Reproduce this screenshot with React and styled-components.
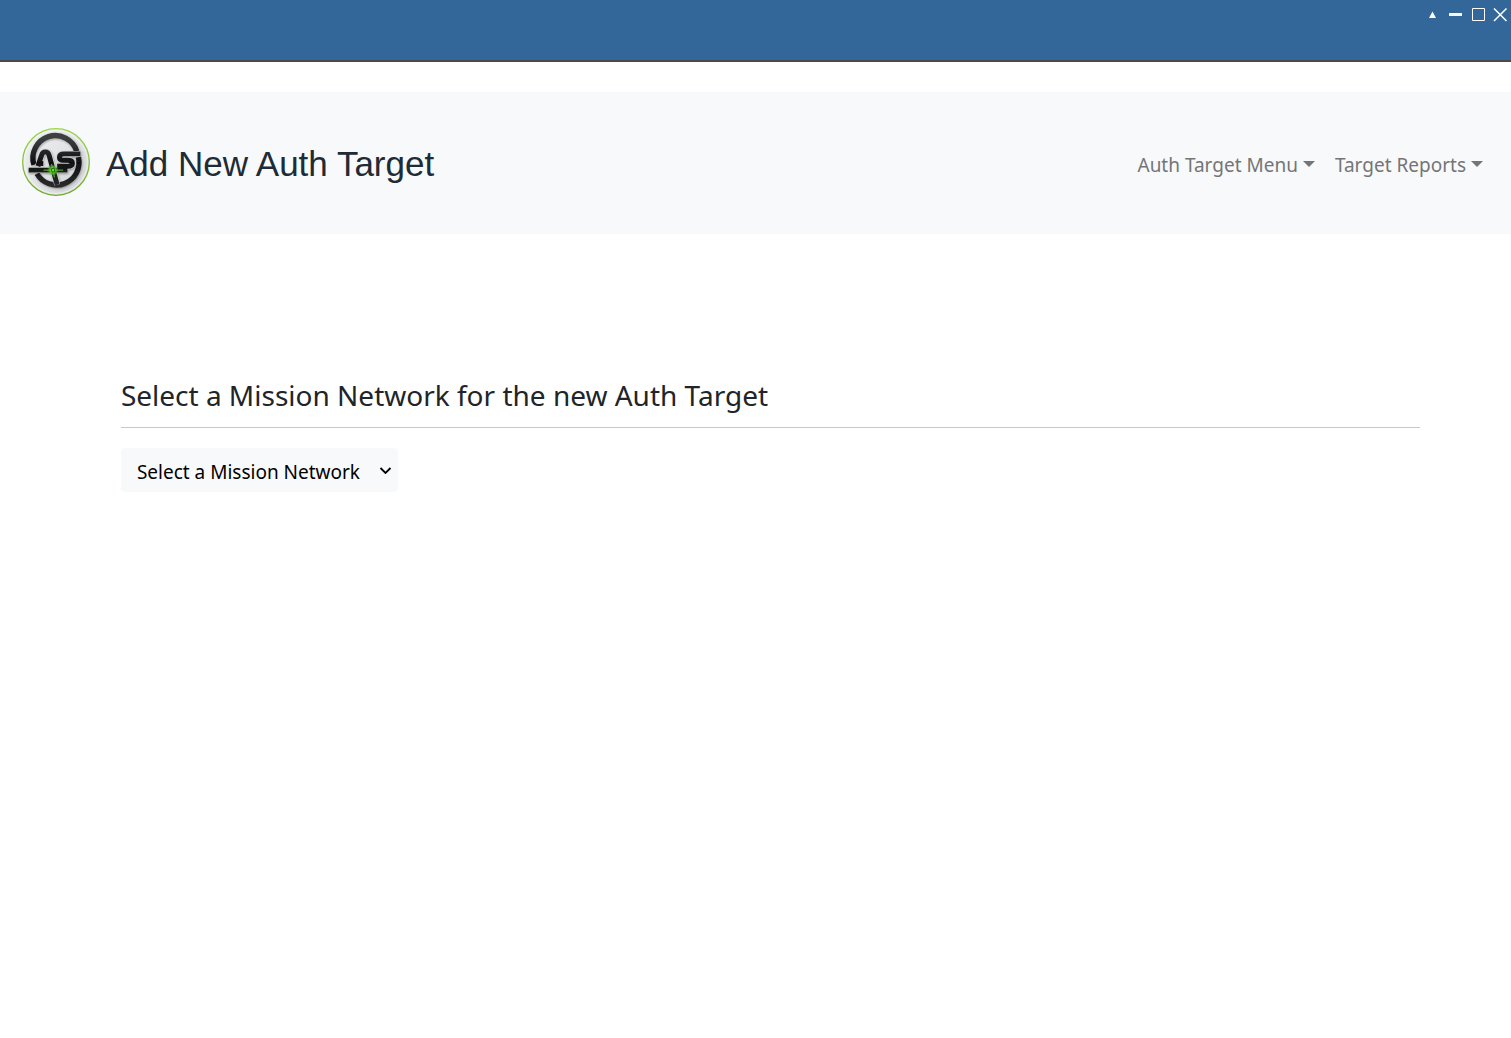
import React from "react";
import styled, { createGlobalStyle } from "styled-components";

const GlobalStyle = createGlobalStyle`
  *, *::before, *::after { box-sizing: border-box; }
  body {
    margin: 0;
    background: #fff;
    color: #212529;
    font-family: "Segoe UI", "Noto Sans", sans-serif;
    font-size: 19px;
    line-height: 28px;
  }
`;

const TitleBar = styled.header`
  display: flex;
  justify-content: flex-end;
  align-items: flex-start;
  height: 62px;
  padding: 4px 0;
  background: #336699;
  border-bottom: 2px solid #4a4a4a;
`;

const WindowButton = styled.button`
  display: grid;
  place-items: center;
  width: 22px;
  height: 22px;
  padding: 0;
  border: 0;
  background: none;
  color: #fff;
  cursor: pointer;
`;

const WindowControls = styled.div`
  display: flex;
`;

const Navbar = styled.nav`
  display: flex;
  align-items: center;
  justify-content: space-between;
  margin-top: 30px;
  padding: 36px 28px 38px 22px;
  background: #f8f9fb;
`;

const Brand = styled.div`
  display: flex;
  align-items: center;
  gap: 16px;
`;

const PageTitle = styled.h1`
  margin: 0;
  padding-top: 4px;
  color: #212b36;
  font: 400 35px/40px Arial, "Liberation Sans", sans-serif;
`;

const Menus = styled.div`
  display: flex;
  gap: 20px;
  padding-top: 6px;
`;

const MenuButton = styled.button`
  display: flex;
  align-items: center;
  gap: 5px;
  padding: 0;
  border: 0;
  background: none;
  color: #747577;
  font: inherit;
  cursor: pointer;

  &::after {
    content: "";
    border: 6px solid transparent;
    border-top-color: currentColor;
    border-bottom: 0;
    margin-bottom: 2px;
  }
`;

const Main = styled.main`
  margin: 141px 6% 0 8%;
`;

const SectionLabel = styled.label`
  display: block;
  padding-bottom: 12px;
  border-bottom: 1px solid #c7c8c9;
  font-size: 28px;
  line-height: 40px;
`;

const SelectField = styled.div`
  display: inline-grid;
  align-items: center;
  margin-top: 20px;

  > * { grid-area: 1 / 1; }
  > svg {
    justify-self: end;
    margin-right: 6px;
    pointer-events: none;
  }
`;

const NetworkSelect = styled.select`
  appearance: none;
  width: 277px;
  height: 44px;
  padding: 4px 32px 0 16px;
  border: 0;
  border-radius: 4px;
  background: #f8f9fb;
  color: #000;
  font: inherit;
`;

const Logo = () => (
  <svg width="68" height="68" viewBox="18 18 205 205" role="img" aria-label="AS logo">
    <defs>
      <linearGradient id="face" x1="0" y1="0" x2="1" y2="1">
        <stop offset="0" stopColor="#f2f2f2" />
        <stop offset="0.5" stopColor="#e2e3e4" />
        <stop offset="1" stopColor="#cfd0d1" />
      </linearGradient>
      <linearGradient id="ink" gradientUnits="userSpaceOnUse" x1="0" y1="50" x2="0" y2="195">
        <stop offset="0" stopColor="#3d3f41" />
        <stop offset="0.5" stopColor="#101112" />
        <stop offset="1" stopColor="#2a2b2c" />
      </linearGradient>
      <linearGradient id="rim" x1="0" y1="0" x2="0" y2="1">
        <stop offset="0" stopColor="#9bd746" />
        <stop offset="1" stopColor="#72aa2d" />
      </linearGradient>
      <radialGradient id="glow">
        <stop offset="0" stopColor="#9dff4f" />
        <stop offset="0.4" stopColor="#55cc25" />
        <stop offset="1" stopColor="#55cc25" stopOpacity="0" />
      </radialGradient>
      <filter id="shade" x="-20%" y="-20%" width="140%" height="140%">
        <feDropShadow dx="2" dy="3" stdDeviation="3" floodOpacity="0.35" />
      </filter>
      <g id="ring" fill="none">
        <path d="M54 129A67 67 0 0 1 183 88" />
        <path d="M188 106A68 68 0 0 1 63 156" />
      </g>
      <g id="letters" fill="none">
        <path d="M66 133L77 100Q80 90 88 90Q97 90 100 101L124 189" />
        <path d="M66 125H82" />
        <path d="M194 96H145Q131 96 131 106Q131 115 143 115H155Q170 115 170 124Q170 133 156 133H124" />
        <path d="M38 145H155" />
      </g>
    </defs>
    <circle cx="120.500" cy="120.500" r="100.500" fill="url(#face)" stroke="url(#rim)" strokeWidth="4" />
    <circle cx="120.500" cy="120.500" r="95" fill="none" stroke="#f4f5f5" strokeWidth="5" opacity="0.6" />
    <g filter="url(#shade)">
      <use href="#ring" stroke="url(#ink)" strokeWidth="16" />
      <use href="#letters" stroke="#cfd0d1" strokeWidth="18" />
      <use href="#letters" stroke="url(#ink)" strokeWidth="15" />
    </g>
    <path d="M83 145H142M107 127L116 167" stroke="#63b832" strokeWidth="3" />
    <circle cx="111" cy="145" r="18" fill="url(#glow)" />
    <path d="M106 141L115 139L117 149L109 151Z" fill="#67d838" stroke="#102f0a" strokeWidth="2" />
  </svg>
);

export default function App() {
  return (
    <>
      <GlobalStyle />
      <TitleBar>
        <WindowControls>
          <WindowButton aria-label="Roll up">
            <svg width="12" height="8" viewBox="0 0 12 8"><path d="M4.500 0.500L8 7H1Z" fill="currentColor" /></svg>
          </WindowButton>
          <WindowButton aria-label="Minimize">
            <svg width="14" height="14" viewBox="0 0 14 14"><path d="M0 5h13v3H0z" fill="currentColor" opacity="0.950" /></svg>
          </WindowButton>
          <WindowButton aria-label="Maximize">
            <svg width="14" height="14" viewBox="0 0 14 14"><path d="M1.500 0.500h12v12h-12z" fill="none" stroke="currentColor" strokeWidth="1" /></svg>
          </WindowButton>
          <WindowButton aria-label="Close">
            <svg width="14" height="14" viewBox="0 0 14 14"><path d="M1 0.500L13.500 13M13.500 0.500L1 13" stroke="currentColor" strokeWidth="1.500" /></svg>
          </WindowButton>
        </WindowControls>
      </TitleBar>
      <Navbar>
        <Brand>
          <Logo />
          <PageTitle>Add New Auth Target</PageTitle>
        </Brand>
        <Menus>
          <MenuButton aria-haspopup="menu">Auth Target Menu</MenuButton>
          <MenuButton aria-haspopup="menu">Target Reports</MenuButton>
        </Menus>
      </Navbar>
      <Main>
        <SectionLabel htmlFor="network">Select a Mission Network for the new Auth Target</SectionLabel>
        <SelectField>
          <NetworkSelect id="network" defaultValue="">
            <option value="">Select a Mission Network</option>
          </NetworkSelect>
          <svg width="13" height="8" viewBox="0 0 13 8" aria-hidden="true">
            <path d="M1.500 2L6.500 7L11.500 2" fill="none" stroke="#000" strokeWidth="1.800" />
          </svg>
        </SelectField>
      </Main>
    </>
  );
}
